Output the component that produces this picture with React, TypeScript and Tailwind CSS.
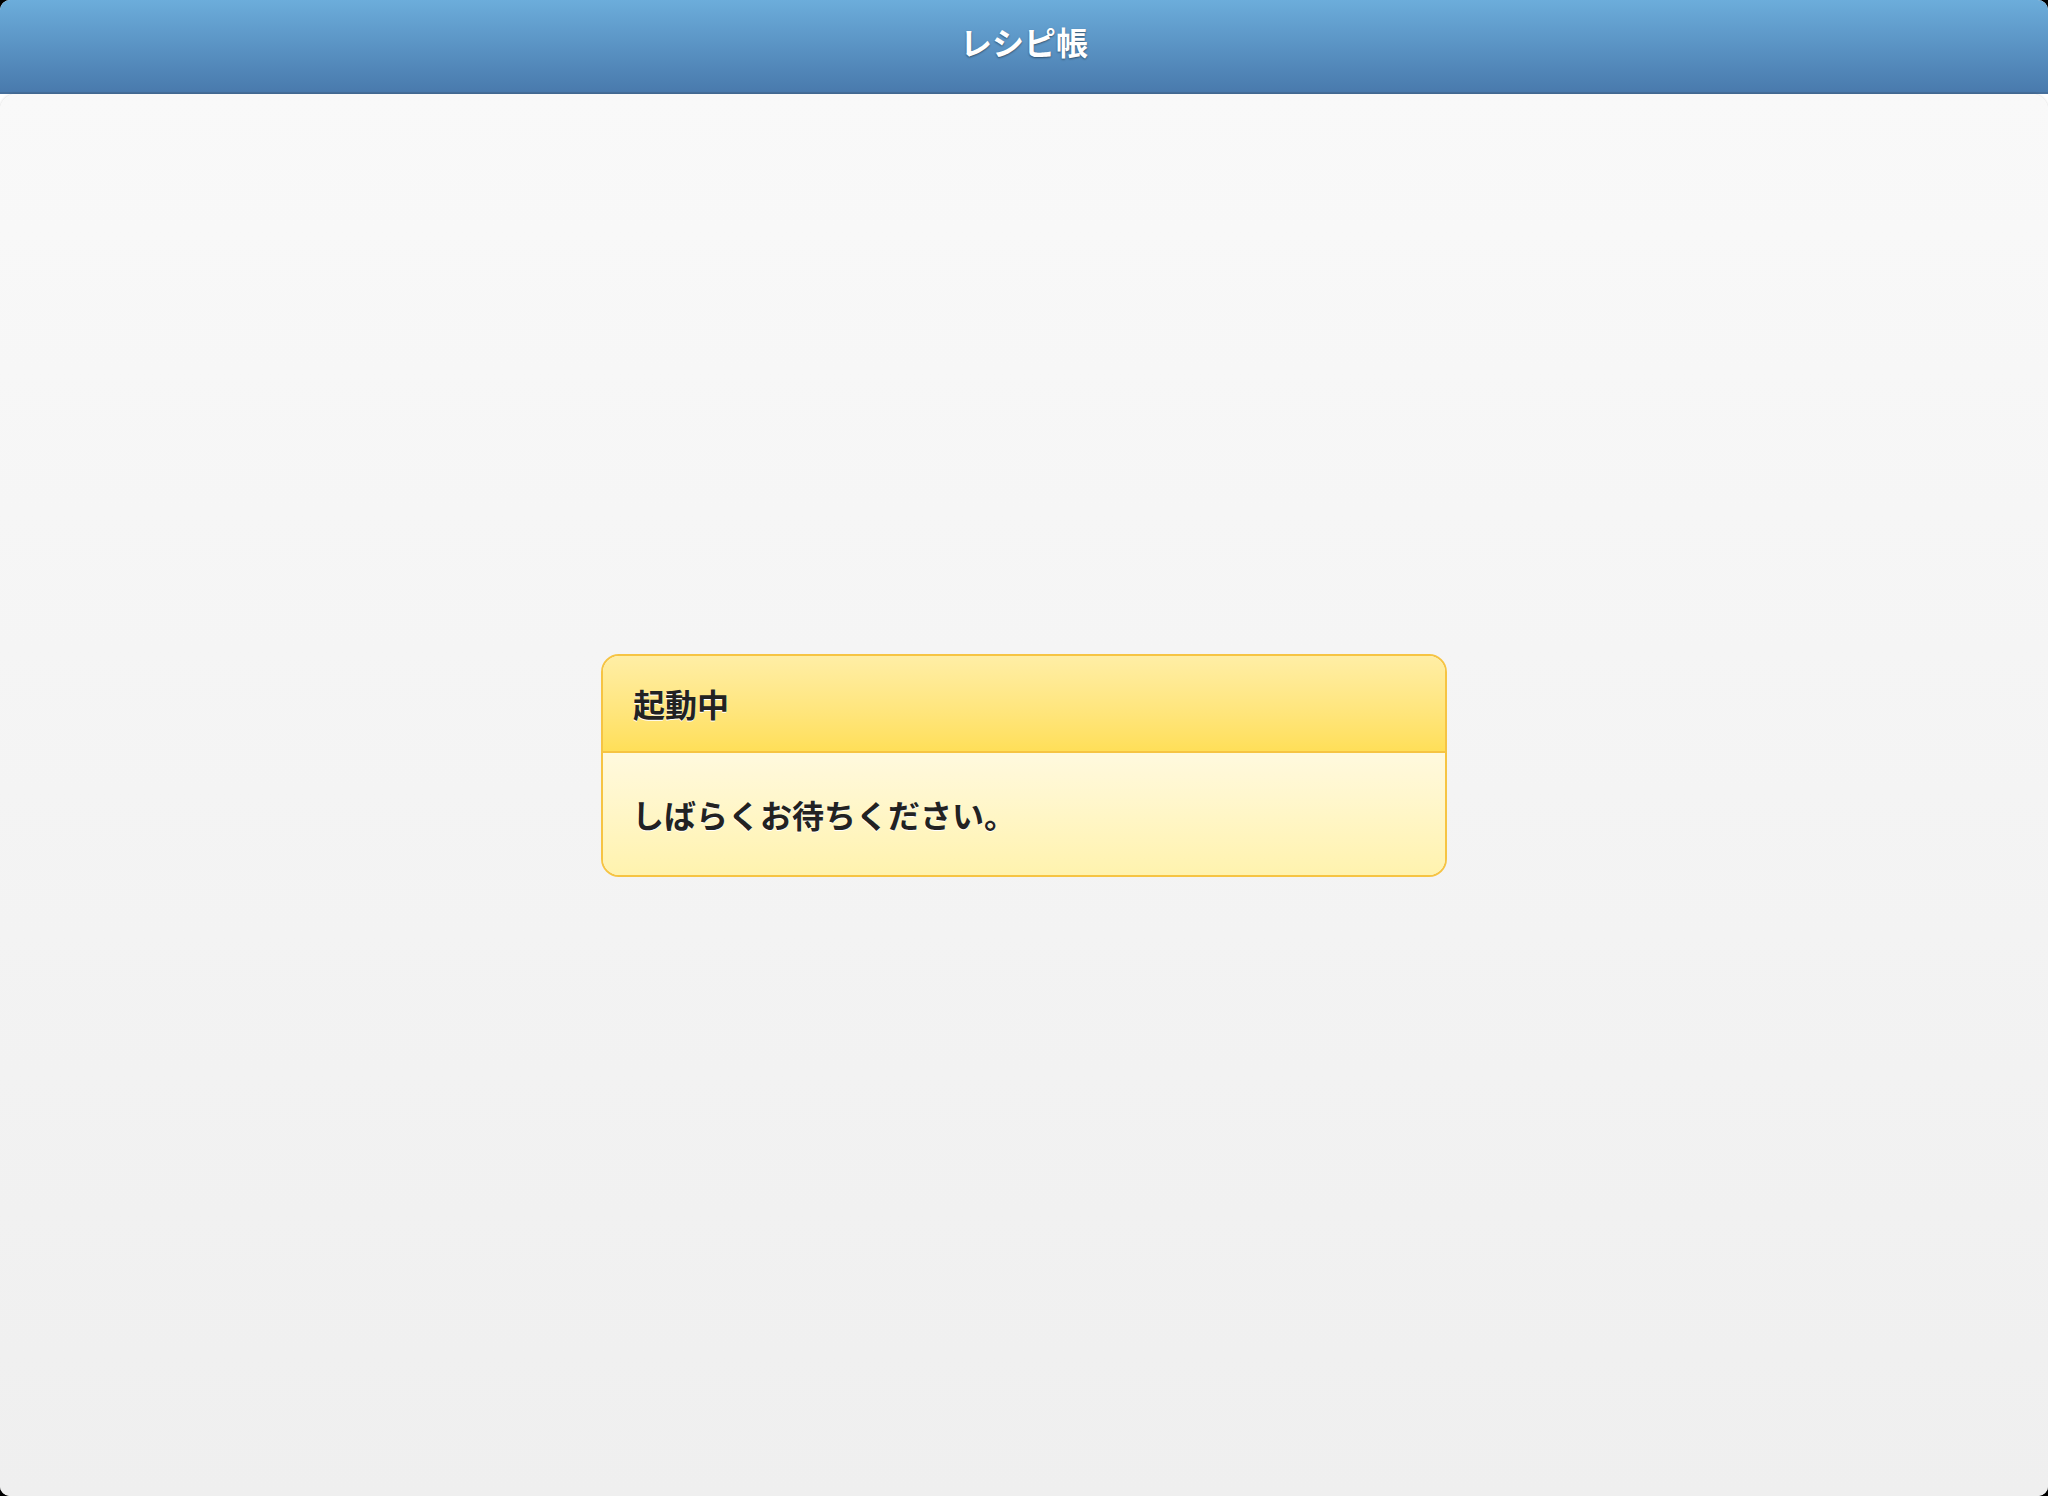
const jp = { fontFamily: '"Noto Sans CJK JP", "Noto Sans", sans-serif' };

/**
 * Startup screen: blue title bar and a yellow "please wait" notice in the middle.
 */
export default function App() {
  return (
    <div className="h-[1496px] w-[2048px] overflow-hidden bg-black" style={jp}>
      <div className="flex h-full flex-col overflow-hidden rounded-[10px] bg-white">
        <header className="flex h-[94px] shrink-0 items-center justify-center border-b-2 border-[#466f9b] bg-gradient-to-b from-[#6caddb] to-[#497aad]">
          <h1 className="pb-[10px] text-[32px] font-bold text-white [text-shadow:0_1px_2px_rgba(0,0,0,0.45)]">
            レシピ帳
          </h1>
        </header>

        <main className="flex flex-1 items-center justify-center rounded-t-[16px] bg-gradient-to-b from-[#f9f9f9] to-[#efefef] pb-[60px] shadow-[0_0_3px_rgba(0,0,0,0.18)]">
          <div className="w-[846px] overflow-hidden rounded-[18px] border-2 border-[#f6c443] text-[#222] [text-shadow:0_1px_0_#fff]">
            <div className="flex h-[97px] items-center border-b-2 border-[#f6c443] bg-gradient-to-b from-[#ffeea5] to-[#ffdf58] px-[30px]">
              <h2 className="text-[32px] font-bold">起動中</h2>
            </div>
            <div className="flex h-[122px] items-center bg-gradient-to-b from-[#fff9de] to-[#fff3ae] px-[29px]">
              <p className="text-[32px] font-bold">しばらくお待ちください。</p>
            </div>
          </div>
        </main>
      </div>
    </div>
  );
}
